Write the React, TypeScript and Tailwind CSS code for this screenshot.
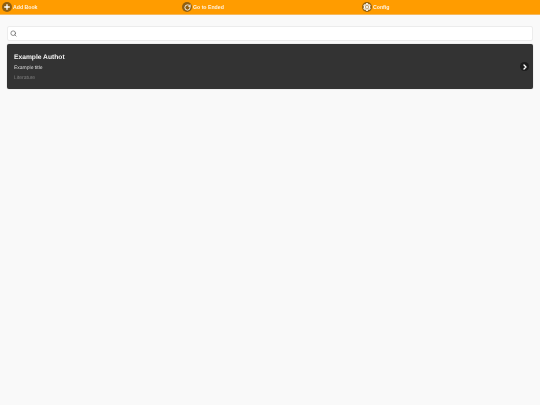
import { Plus, RotateCw, Settings, Search, ChevronRight } from "lucide-react";

const navItems = [
    { label: "Add Book", icon: <Plus size={8} strokeWidth={4} /> },
    { label: "Go to Ended", icon: <RotateCw size={7} strokeWidth={3} /> },
    { label: "Config", icon: <Settings size={8} strokeWidth={3.5} /> },
];

export default function App() {
    return (
        <div className="min-h-[405px] bg-[#f9f9f9] font-['Liberation_Sans',Arial,sans-serif] [text-rendering:geometricPrecision]">
            <header className="grid h-[15px] grid-cols-3 border-b border-[#f5b85c] bg-[#ff9c00]">
                {navItems.map((item) => (
                    <button key={item.label} className="flex items-center gap-[1px] pl-[2px] text-[5.2px] font-bold text-[#fff3df]">
                        <span className="flex h-[10px] w-[10px] items-center justify-center rounded-full bg-[#8f5f12] text-white">
                            {item.icon}
                        </span>
                        <span className="pt-[1px] [will-change:transform]">{item.label}</span>
                    </button>
                ))}
            </header>

            <main className="flex flex-col gap-[3px] px-[7px] pt-[11px]">
                <div className="flex h-[15px] items-center rounded-[2px] border border-[#ececec] bg-white pl-[2px]">
                    <Search size={7} strokeWidth={2.5} className="text-[#666]" />
                </div>

                <div className="flex h-[45px] items-center justify-between rounded-[2px] bg-[#333] pl-[7px] pr-[4px] shadow-[0_0_1px_#999]">
                    <div className="flex flex-col pt-[1px]">
                        <h2 className="text-[6.7px] leading-[10px] font-bold text-[#f4f4f4] [will-change:transform]">Example Authot</h2>
                        <p className="mt-[2px] text-[5px] leading-[7px] text-[#ddd] [will-change:transform]">Example title</p>
                        <p className="mt-[3px] text-[5px] leading-[7px] text-[#808080] [will-change:transform]">Literature</p>
                    </div>
                    <span className="flex h-[9px] w-[9px] items-center justify-center rounded-full bg-[#1c1c1c]">
                        <ChevronRight size={8} strokeWidth={4} className="text-white" />
                    </span>
                </div>
            </main>
        </div>
    );
}
